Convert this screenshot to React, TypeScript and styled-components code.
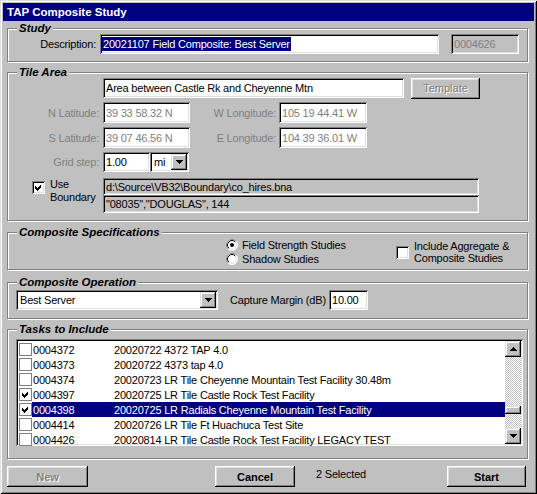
import React from "react";
import styled, { createGlobalStyle } from "styled-components";

interface Task {
  id: string;
  title: string;
  checked: boolean;
  selected?: boolean;
}

const tasks: Task[] = [
  { id: "0004372", title: "20020722 4372 TAP 4.0", checked: false },
  { id: "0004373", title: "20020722 4373 tap 4.0", checked: false },
  { id: "0004374", title: "20020723 LR Tile Cheyenne Mountain Test Facility 30.48m", checked: false },
  { id: "0004397", title: "20020725 LR Tile Castle Rock Test Facility", checked: true },
  { id: "0004398", title: "20020725 LR Radials Cheyenne Mountain Test Facility", checked: true, selected: true },
  { id: "0004414", title: "20020726 LR Tile Ft Huachuca Test Site", checked: false },
  { id: "0004426", title: "20020814 LR Tile Castle Rock Test Facility LEGACY TEST", checked: false },
];

// scroll position of the task list (first visible item / last possible first item)
const scrollTop = 0.7;

const GlobalStyle = createGlobalStyle`
  html, body {
    margin: 0;
    padding: 0;
    background: #c0c0c0;
  }
  body {
    font-family: "Liberation Sans", Arial, sans-serif;
    font-size: 11px;
    letter-spacing: -0.2px;
    color: #000;
  }
  * {
    box-sizing: border-box;
  }
`;

const ArrowGlyph = ({ up }: { up?: boolean }) => (
  <svg width="7" height="4" viewBox="0 0 7 4" shapeRendering="crispEdges">
    <polygon points={up ? "3.5,0 7,4 0,4" : "0,0 7,0 3.5,4"} fill="#000" />
  </svg>
);

const CheckMark = () => (
  <svg width="9" height="9" viewBox="0 0 9 9" shapeRendering="crispEdges">
    <polygon points="1,3 3,5 7,1 7,4 3,8 1,6" fill="#000" />
  </svg>
);

const Check = ({ checked, flat }: { checked: boolean; flat?: boolean }) => (
  <CheckBox $flat={flat}>{checked && <CheckMark />}</CheckBox>
);

const Radio = ({ on }: { on: boolean }) => (
  <svg width="12" height="12" viewBox="0 0 12 12">
    <circle cx="6" cy="6" r="5.5" fill="#fff" stroke="#fff" />
    <path d="M2.11 9.89 A5.5 5.5 0 0 1 9.89 2.11" fill="none" stroke="#808080" />
    <circle cx="6" cy="6" r="4.5" fill="#fff" stroke="#dfdfdf" />
    <path d="M2.82 9.18 A4.5 4.5 0 0 1 9.18 2.82" fill="none" stroke="#000" />
    {on && <circle cx="6" cy="6" r="2" fill="#000" />}
  </svg>
);

export default function App() {
  return (
    <>
      <GlobalStyle />
      <Window>
        <TitleBar>TAP Composite Study</TitleBar>

        <Group $top={1}>
          <Caption>Study</Caption>
          <StudyBody>
            <Label $w={88}>Description:</Label>
            <Field $w={339} $h={20}>
              <Selection>20021107 Field Composite: Best Server</Selection>
            </Field>
            <Field $w={68} $h={20} $gray $dim style={{ marginLeft: 12 }}>
              0004626
            </Field>
          </StudyBody>
        </Group>

        <Group $top={4}>
          <Caption>Tile Area</Caption>
          <TileBody>
            <Row $h={20}>
              <Indent />
              <Field $w={301} $h={20}>Area between Castle Rk and Cheyenne Mtn</Field>
              <Button $w={69} $h={21} $disabled style={{ marginLeft: 7 }}>
                Template
              </Button>
            </Row>
            <Row $h={21}>
              <Label $w={91} $dim>N Latitude:</Label>
              <Field $w={87} $h={21} $dim>39 33 58.32 N</Field>
              <Label $w={86} $dim $gap={3}>W Longitude:</Label>
              <Field $w={88} $h={21} $dim>105 19 44.41 W</Field>
            </Row>
            <Row $h={21}>
              <Label $w={91} $dim>S Latitude:</Label>
              <Field $w={87} $h={21} $dim>39 07 46.56 N</Field>
              <Label $w={86} $dim $gap={3}>E Longitude:</Label>
              <Field $w={88} $h={21} $dim>104 39 36.01 W</Field>
            </Row>
            <Row $h={20}>
              <Label $w={91} $dim>Grid step:</Label>
              <Field $w={47} $h={20}>1.00</Field>
              <Combo $w={39}>
                <span>mi</span>
                <DropButton>
                  <ArrowGlyph />
                </DropButton>
              </Combo>
            </Row>
            <BoundaryRow>
              <BoundaryToggle>
                <Check checked />
                <TwoLine>
                  Use
                  <br />
                  Boundary
                </TwoLine>
              </BoundaryToggle>
              <BoundaryBoxes>
                <Field $w={376} $h={17} $gray>d:\Source\VB32\Boundary\co_hires.bna</Field>
                <Field $w={376} $h={18} $gray>"08035","DOUGLAS", 144</Field>
              </BoundaryBoxes>
            </BoundaryRow>
          </TileBody>
        </Group>

        <Group $top={5}>
          <Caption>Composite Specifications</Caption>
          <SpecBody>
            <RadioColumn>
              <Option>
                <Radio on />
                Field Strength Studies
              </Option>
              <Option>
                <Radio on={false} />
                Shadow Studies
              </Option>
            </RadioColumn>
            <Option>
              <Check checked={false} />
              <TwoLine>
                Include Aggregate &amp;
                <br />
                Composite Studies
              </TwoLine>
            </Option>
          </SpecBody>
        </Group>

        <Group $top={6}>
          <Caption>Composite Operation</Caption>
          <OperationBody>
            <Combo $w={202}>
              <span>Best Server</span>
              <DropButton>
                <ArrowGlyph />
              </DropButton>
            </Combo>
            <Label $w={97} $align="left" $gap={2} style={{ marginLeft: 12 }}>
              Capture Margin (dB)
            </Label>
            <Field $w={39} $h={20}>10.00</Field>
          </OperationBody>
        </Group>

        <Group $top={4}>
          <Caption>Tasks to Include</Caption>
          <TasksBody>
            <ListBox>
              <Rows>
                {tasks.map((task) => (
                  <TaskRow key={task.id}>
                    <CheckCell>
                      <Check checked={task.checked} flat />
                    </CheckCell>
                    <TaskText $selected={!!task.selected}>
                      <TaskId>{task.id}</TaskId>
                      <span>{task.title}</span>
                    </TaskText>
                  </TaskRow>
                ))}
              </Rows>
              <ScrollBar>
                <ScrollButton>
                  <ArrowGlyph up />
                </ScrollButton>
                <Track>
                  <Thumb style={{ marginTop: Math.round(scrollTop * 62) + 6 }} />
                </Track>
                <ScrollButton>
                  <ArrowGlyph />
                </ScrollButton>
              </ScrollBar>
            </ListBox>
          </TasksBody>
        </Group>

        <Footer>
          <Button $w={81} $h={21} $bold $disabled>
            New
          </Button>
          <Button $w={80} $h={21} $bold style={{ marginLeft: 127 }}>
            Cancel
          </Button>
          <Status>2 Selected</Status>
          <Button $w={79} $h={21} $bold style={{ marginLeft: "auto" }}>
            Start
          </Button>
        </Footer>
      </Window>
    </>
  );
}

const Window = styled.div`
  width: 537px;
  height: 494px;
  padding: 3px;
  display: flex;
  flex-direction: column;
  background: #c0c0c0;
  box-shadow: inset 1px 1px #dfdfdf, inset -1px -1px #000, inset 2px 2px #fff,
    inset -2px -2px #808080;
`;

const TitleBar = styled.div`
  height: 18px;
  display: flex;
  align-items: center;
  padding-left: 4px;
  background: #000080;
  color: #fff;
  font-weight: bold;
  font-size: 11.5px;
  letter-spacing: 0;
`;

const Group = styled.fieldset<{ $top: number }>`
  margin: ${(p) => p.$top}px 6px 0 4px;
  padding: 0;
  min-width: 0;
  border: 1px solid #808080;
  box-shadow: 1px 1px 0 #fff, inset 1px 1px 0 #fff;
`;

const Caption = styled.legend`
  margin-left: 9px;
  padding: 0 2px;
  font-weight: bold;
  font-style: italic;
  font-size: 11.5px;
  line-height: 12px;
  letter-spacing: 0;
  background: #c0c0c0;
`;

const Label = styled.div<{ $w: number; $dim?: boolean; $gap?: number; $align?: string }>`
  width: ${(p) => p.$w}px;
  margin-right: ${(p) => p.$gap ?? 4}px;
  text-align: ${(p) => p.$align ?? "right"};
  white-space: nowrap;
  color: ${(p) => (p.$dim ? "#808080" : "#000")};
`;

const Field = styled.div<{ $w: number; $h: number; $gray?: boolean; $dim?: boolean }>`
  width: ${(p) => p.$w}px;
  height: ${(p) => p.$h}px;
  flex: none;
  display: flex;
  align-items: center;
  padding: 0 3px;
  overflow: hidden;
  white-space: nowrap;
  background: ${(p) => (p.$gray ? "#c0c0c0" : "#fff")};
  color: ${(p) => (p.$dim ? "#808080" : "#000")};
  box-shadow: inset 1px 1px #808080, inset -1px -1px #fff, inset 2px 2px #000,
    inset -2px -2px #dfdfdf;
`;

const Selection = styled.span`
  background: #000080;
  color: #fff;
  line-height: 14px;
  margin-left: -1px;
  padding: 0 1px;
`;

const Combo = styled.div<{ $w: number }>`
  width: ${(p) => p.$w}px;
  height: 20px;
  flex: none;
  display: flex;
  align-items: center;
  justify-content: space-between;
  padding: 0 2px 0 4px;
  background: #fff;
  box-shadow: inset 1px 1px #808080, inset -1px -1px #fff, inset 2px 2px #000,
    inset -2px -2px #dfdfdf;
`;

const Raised = styled.div`
  display: flex;
  align-items: center;
  justify-content: center;
  background: #c0c0c0;
  box-shadow: inset -1px -1px #000, inset 1px 1px #dfdfdf, inset -2px -2px #808080,
    inset 2px 2px #fff;
`;

const DropButton = styled(Raised)`
  width: 16px;
  height: 16px;
`;

const Button = styled.button<{ $w: number; $h: number; $bold?: boolean; $disabled?: boolean }>`
  width: ${(p) => p.$w}px;
  height: ${(p) => p.$h}px;
  flex: none;
  border: none;
  padding: 0;
  font: inherit;
  font-weight: ${(p) => (p.$bold ? "bold" : "normal")};
  background: #c0c0c0;
  color: ${(p) => (p.$disabled ? "#808080" : "#000")};
  text-shadow: ${(p) => (p.$disabled ? "1px 1px 0 #fff" : "none")};
  box-shadow: inset -1px -1px #000, inset 1px 1px #fff, inset -2px -2px #808080,
    inset 2px 2px #dfdfdf;
`;

const CheckBox = styled.div<{ $flat?: boolean }>`
  width: 13px;
  height: 13px;
  flex: none;
  display: flex;
  align-items: center;
  justify-content: center;
  background: #fff;
  box-shadow: ${(p) =>
    p.$flat
      ? "inset 0 0 0 1px #808080"
      : "inset 1px 1px #808080, inset -1px -1px #fff, inset 2px 2px #000, inset -2px -2px #dfdfdf"};
`;

const StudyBody = styled.div`
  display: flex;
  align-items: center;
  padding-bottom: 7px;
`;

const TileBody = styled.div`
  display: flex;
  flex-direction: column;
  gap: 4px;
  padding-bottom: 7px;
`;

const Row = styled.div<{ $h: number }>`
  display: flex;
  align-items: center;
  height: ${(p) => p.$h}px;
`;

const Indent = styled.div`
  width: 95px;
`;

const BoundaryRow = styled.div`
  display: flex;
  margin-top: 2px;
`;

const BoundaryToggle = styled.div`
  width: 95px;
  display: flex;
  align-items: flex-start;
  gap: 5px;
  padding-left: 24px;

  & > div:first-child {
    margin-top: 3px;
  }
`;

const TwoLine = styled.div`
  line-height: 13px;
`;

const BoundaryBoxes = styled.div`
  display: flex;
  flex-direction: column;
`;

const SpecBody = styled.div`
  display: flex;
  align-items: center;
  padding: 0 0 3px 218px;
`;

const RadioColumn = styled.div`
  width: 170px;
  display: flex;
  flex-direction: column;
`;

const Option = styled.div`
  display: flex;
  align-items: center;
  gap: 4px;
  height: 14px;

  & > div:last-child {
    line-height: 12px;
    margin-left: 1px;
  }
`;

const OperationBody = styled.div`
  display: flex;
  align-items: center;
  padding: 2px 0 8px 8px;
`;

const TasksBody = styled.div`
  padding: 4px 0 12px 8px;
`;

const ListBox = styled.div`
  width: 507px;
  height: 107px;
  display: flex;
  padding: 2px;
  background: #fff;
  box-shadow: inset 1px 1px #808080, inset -1px -1px #fff, inset 2px 2px #000,
    inset -2px -2px #dfdfdf;
`;

const Rows = styled.div`
  flex: 1;
  display: flex;
  flex-direction: column;
  padding-top: 1px;
`;

const TaskRow = styled.div`
  display: flex;
  align-items: center;
  height: 15px;
`;

const CheckCell = styled.div`
  padding-left: 1px;
`;

const TaskText = styled.div<{ $selected: boolean }>`
  flex: 1;
  display: flex;
  height: 15px;
  align-items: center;
  white-space: nowrap;
  background: ${(p) => (p.$selected ? "#000080" : "transparent")};
  color: ${(p) => (p.$selected ? "#fff" : "#000")};
`;

const TaskId = styled.span`
  width: 82px;
  padding-left: 1px;
`;

const ScrollBar = styled.div`
  width: 16px;
  display: flex;
  flex-direction: column;
`;

const ScrollButton = styled(Raised)`
  width: 16px;
  height: 16px;
`;

const Track = styled.div`
  flex: 1;
  background-image: conic-gradient(#fff 25%, #c0c0c0 0 50%, #fff 0 75%, #c0c0c0 0);
  background-size: 2px 2px;
`;

const Thumb = styled(Raised)`
  width: 16px;
  height: 8px;
`;

const Footer = styled.div`
  display: flex;
  align-items: flex-start;
  margin-top: 7px;
  padding: 0 8px 0 4px;
`;

const Status = styled.div`
  margin: 2px 0 0 21px;
`;
